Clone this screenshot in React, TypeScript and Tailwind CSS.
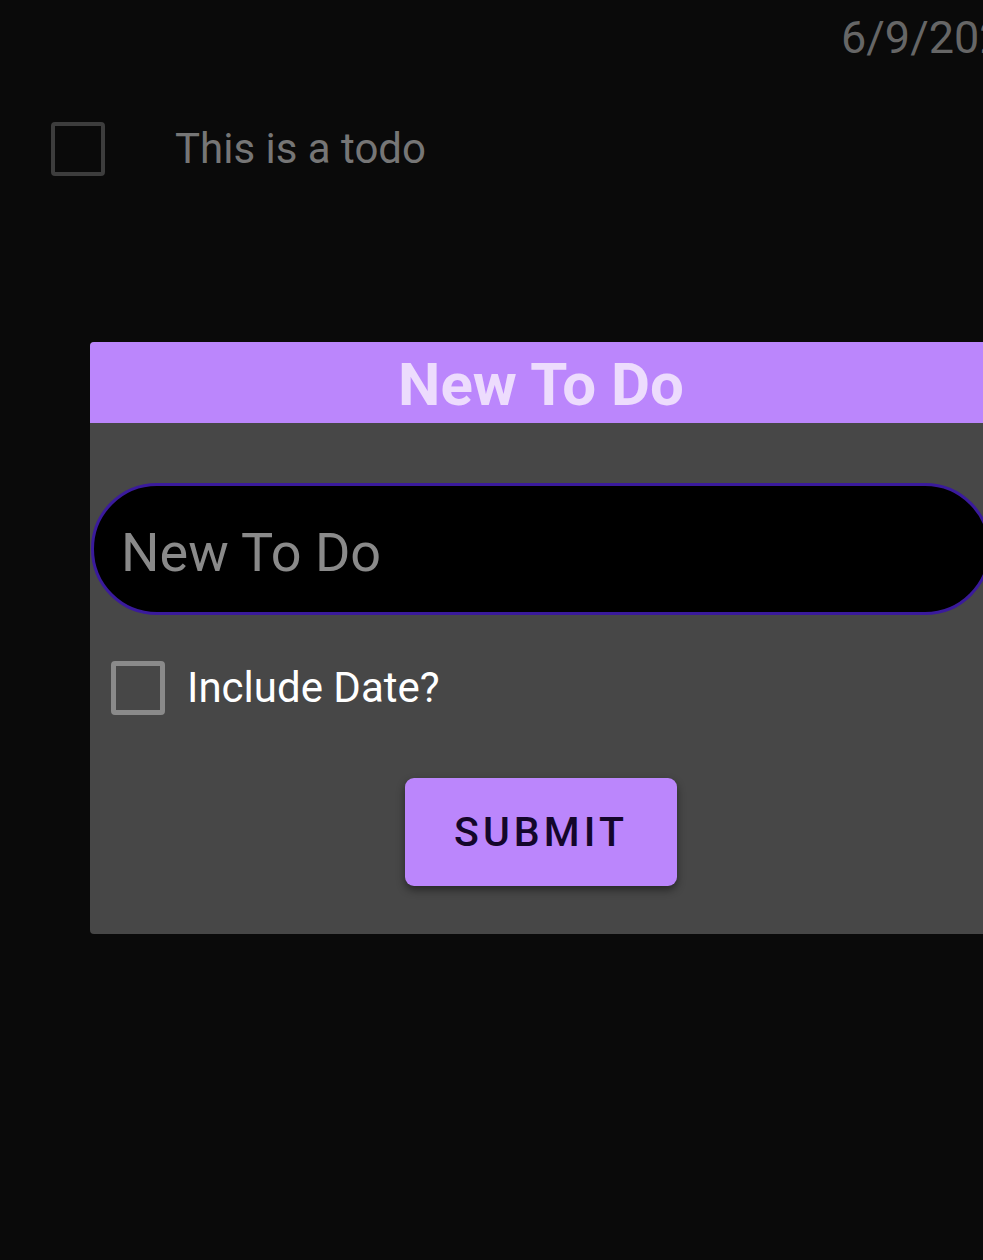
import * as React from "react";

const FONT = "font-['Roboto','Noto_Sans',sans-serif]";

function Checkbox({ className }: { className: string }) {
  return <div className={`box-border h-[54px] w-[54px] shrink-0 rounded-[4px] ${className}`} />;
}

export default function App() {
  const [text, setText] = React.useState("");

  return (
    <div className={`h-[1260px] w-[983px] overflow-hidden bg-[#0a0a0a] ${FONT}`}>
      {/* date header */}
      <div className="h-[48px] whitespace-nowrap pl-[841px] pt-[15px] text-[45px] leading-none text-[#666666]">
        6/9/2023
      </div>

      {/* todo list */}
      <div className="mt-[74px] flex items-center pl-[51px]">
        <Checkbox className="border-[4px] border-[#3d3d3d]" />
        <span className="ml-[70px] text-[42px] leading-none text-[#767676]">This is a todo</span>
      </div>

      {/* new todo dialog */}
      <div className="ml-[90px] mt-[166px] w-[902px] overflow-hidden rounded-[4px] bg-[#474747]">
        <div className="h-[81px] bg-[#bb86fc] pt-[13px] text-center text-[60px] font-bold leading-none text-[#eddcfd]">
          New To Do
        </div>

        <div className="flex flex-col pb-[48px] pt-[60px]">
          <div className="ml-px flex h-[132px] w-[900px] items-center rounded-full border-[3px] border-[#3a1a9c] bg-black px-[27px] pt-[6px]">
            <input
              value={text}
              onChange={(e) => setText(e.target.value)}
              placeholder="New To Do"
              className="w-full bg-transparent text-[54px] leading-none text-white outline-none placeholder:text-[#8a8a8a]"
            />
          </div>

          <label className="mt-[46px] flex items-center pl-[21px]">
            <Checkbox className="border-[5px] border-[#8a8a8a]" />
            <span className="ml-[22px] text-[42px] leading-none text-white">Include Date?</span>
          </label>

          <button className="mx-auto mt-[63px] flex h-[108px] w-[272px] items-center justify-center rounded-[9px] bg-[#bb86fc] text-[41px] font-medium leading-none tracking-[0.1em] text-[#14062a] shadow-[0_4px_8px_rgba(0,0,0,0.45)]">
            SUBMIT
          </button>
        </div>
      </div>
    </div>
  );
}
